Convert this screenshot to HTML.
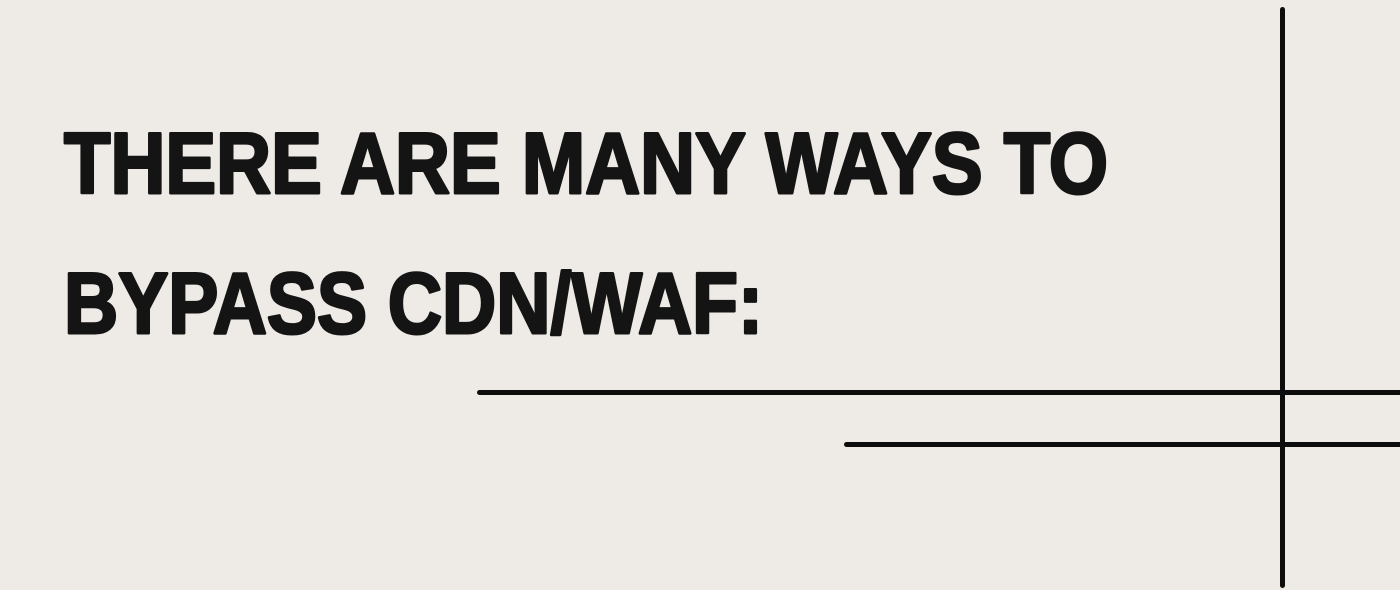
<!DOCTYPE html>
<html><head><style>
html,body{margin:0;padding:0}
body{width:1400px;height:590px;background:#eeebe6;position:relative;overflow:hidden}
.l{position:absolute;background:#0d0d0d;border-radius:3px}
svg{position:absolute;left:0;top:0}
</style></head><body>
<svg width="1400" height="590">
<text x="64" y="193" textLength="1044" lengthAdjust="spacingAndGlyphs" font-family="Liberation Sans, sans-serif" font-weight="bold" font-size="86" fill="#141414" stroke="#141414" stroke-width="3" stroke-linejoin="round">THERE ARE MANY WAYS TO</text>
<text x="64" y="333" textLength="699" lengthAdjust="spacingAndGlyphs" font-family="Liberation Sans, sans-serif" font-weight="bold" font-size="86" fill="#141414" stroke="#141414" stroke-width="3" stroke-linejoin="round">BYPASS CDN/WAF:</text>
</svg>
<div class="l" style="left:1280px;top:7px;width:5px;height:581px"></div>
<div class="l" style="left:477px;top:390px;width:930px;height:5px"></div>
<div class="l" style="left:844px;top:442px;width:560px;height:5px"></div>
</body></html>
